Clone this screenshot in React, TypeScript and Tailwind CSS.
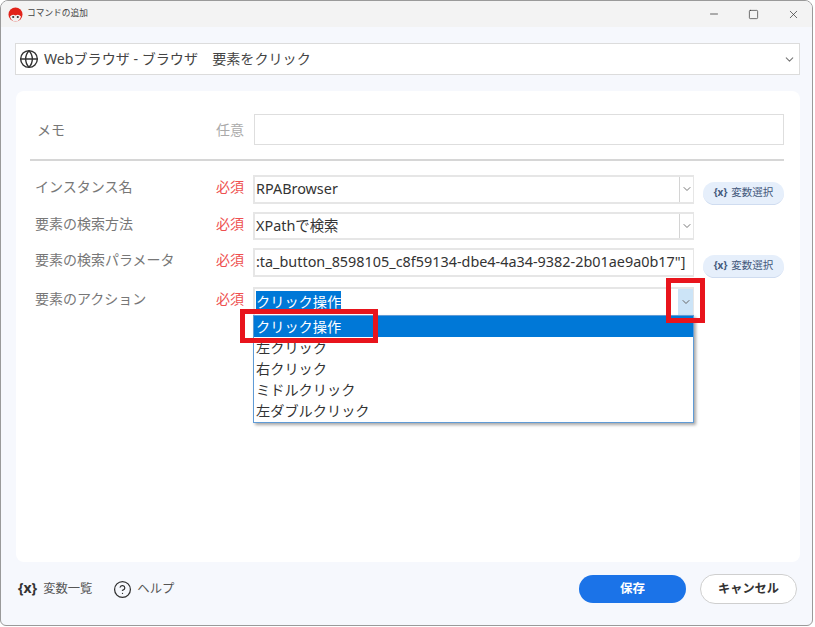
import { ChevronDown, Globe, Minus, Square, X, CircleHelp } from 'lucide-react'

const options = ['クリック操作', '左クリック', '右クリック', 'ミドルクリック', '左ダブルクリック']

function Logo() {
  return (
    <svg width="15" height="15" viewBox="0 0 15 15" className="shrink-0">
      <circle cx="7.5" cy="7.5" r="7" fill="#e2231a" />
      <path d="M2 9.5 Q4.5 6.5 7.5 8.5 Q10.5 6.5 13 9.5 Q11.5 14.5 7.5 14.5 Q3.5 14.5 2 9.5Z" fill="#f1f1f1" />
      <circle cx="5.2" cy="10" r="1.1" fill="#333" />
      <circle cx="9.8" cy="10" r="1.1" fill="#333" />
    </svg>
  )
}

function VarButton({ className }: { className?: string }) {
  return (
    <button className={`w-[81px] h-[23px] ml-[9px] rounded-full bg-[#e6effb] border-b border-[#cfdcf0] text-[10.5px] text-[#44597c] flex items-center justify-center gap-[4px] ${className ?? ''}`}>
      <span className="font-bold text-[10px]">{'{x}'}</span>
      変数選択
    </button>
  )
}

function Field({ label, height, children, button, className }: { label: string; height: string; children: React.ReactNode; button?: string; className?: string }) {
  return (
    <div className={`flex ${height} ${className ?? ''}`}>
      <div className="w-[200px] pl-[19px] text-[14px] text-[#777] leading-[23px] shrink-0">{label}</div>
      <div className="w-[37px] text-[14px] text-[#ee5050] leading-[23px] shrink-0">必須</div>
      {children}
      {button && <VarButton className={button} />}
    </div>
  )
}

function SelectBox({ text }: { text: string }) {
  return (
    <div className="w-[441px] h-full border-2 border-[#e6e6e6] border-r-[1px] flex items-center">
      <span className="flex-1 pl-[1px] text-[14.4px] text-[#333]">{text}</span>
      <span className="w-[14px] h-full border-l border-[#d4d4d4] flex items-center justify-center">
        <ChevronDown size={12} className="text-[#777]" />
      </span>
    </div>
  )
}

export default function App() {
  return (
    <div className="w-[815px] h-[627px] bg-white font-['Noto_Sans','Noto_Sans_CJK_JP',sans-serif]">
      <div className="w-[813px] h-[626px] relative flex flex-col bg-[#f6f8fd] border border-[#9a9a9a] rounded-t-lg rounded-b-md overflow-hidden">
        {/* Title bar */}
        <div className="h-[26px] bg-[#f3f3f3] flex items-center shrink-0 pl-[7px]">
          <Logo />
          <span className="ml-[4px] text-[8.7px] text-[#444]">コマンドの追加</span>
          <div className="ml-auto flex items-center gap-[28px] pr-[12px] text-[#333]">
            <Minus size={12} strokeWidth={1.5} />
            <Square size={11} strokeWidth={1.5} />
            <X size={13} strokeWidth={1.3} />
          </div>
        </div>

        {/* Command selector */}
        <div className="mt-[16px] ml-[14px] w-[785px] h-[32px] bg-white border border-[#dcdcdc] flex items-center pl-[3px] pr-[3px] shrink-0">
          <Globe size={20} strokeWidth={1.7} className="text-[#333]" />
          <span className="ml-[5px] text-[14.1px] text-[#444] whitespace-pre">Webブラウザ - ブラウザ　要素をクリック</span>
          <ChevronDown size={13} className="ml-auto text-[#777]" />
        </div>

        {/* Form card */}
        <div className="relative mt-[16px] ml-[15px] w-[784px] h-[471px] bg-white rounded-lg shrink-0 pt-[23px]">
          <div className="flex h-[31px] items-center">
            <div className="w-[200px] pl-[21px] text-[14px] text-[#777]">メモ</div>
            <div className="w-[38px] text-[14px] text-[#aaa]">任意</div>
            <div className="w-[530px] h-full border border-[#dedede]" />
          </div>
          <div className="mt-[14px] ml-[14px] w-[754px] h-[1.5px] bg-[#d6d6d6]" />

          <Field label="インスタンス名" height="h-[29px]" button="mt-[7px]" className="mt-[14px]">
            <SelectBox text="RPABrowser" />
          </Field>
          <Field label="要素の検索方法" height="h-[28px]" className="mt-[8px]">
            <SelectBox text="XPathで検索" />
          </Field>
          <Field label="要素の検索パラメータ" height="h-[29px]" button="mt-[7px]" className="mt-[8px]">
            <div className="w-[441px] h-full border-2 border-[#e6e6e6] border-r-[1px] flex items-center pl-[1px] text-[14.4px] text-[#333] overflow-hidden whitespace-nowrap">
              :ta_button_8598105_c8f59134-dbe4-4a34-9382-2b01ae9a0b17"]
            </div>
          </Field>
          <Field label="要素のアクション" height="h-[28px]" className="mt-[10px]">
            <div className="relative w-[441px] h-full border-2 border-[#e6e6e6] border-r-[1px] border-b-0 flex items-center">
              <span className="ml-[1px] flex-none bg-[#0078d7] text-white text-[14.2px] leading-[21px]">クリック操作</span>
              <span className="ml-auto w-[15px] h-full bg-[#cce4f7] flex items-center justify-center">
                <ChevronDown size={12} className="text-[#666]" />
              </span>

              {/* Open list */}
              <div className="absolute left-[-2px] top-[26px] w-[441px] h-[108px] bg-white border border-[#5f9bd6] shadow-[2px_2px_3px_rgba(0,0,0,0.35)] z-10">
                {options.map((o, i) => (
                  <div key={o} className={`h-[21px] pl-[2px] text-[14.2px] leading-[21px] ${i === 0 ? 'bg-[#0078d7] text-white' : 'text-[#333]'}`}>
                    {o}
                  </div>
                ))}
              </div>
            </div>
          </Field>

          {/* Red callouts */}
          <div className="absolute left-[224px] top-[218px] w-[138px] h-[34px] border-[5px] border-[#e8141c] z-20" />
          <div className="absolute left-[650px] top-[187px] w-[39px] h-[45px] border-[5px] border-[#e8141c] z-20" />
        </div>

        {/* Footer */}
        <div className="flex-1 flex items-center pl-[17px] pr-[15px] pb-[9px]">
          <span className="text-[14px] font-bold text-[#333] pb-[3px]">{'{x}'}</span>
          <span className="ml-[6px] text-[12.3px] text-[#555]">変数一覧</span>
          <CircleHelp size={19} strokeWidth={1.6} className="ml-[21px] text-[#333]" />
          <span className="ml-[5px] text-[12.3px] text-[#555]">ヘルプ</span>
          <button className="ml-auto w-[107px] h-[28px] rounded-full bg-[#1b73e8] text-white text-[12.5px] font-bold">保存</button>
          <button className="ml-[14px] w-[97px] h-[30px] rounded-full bg-white border border-[#cfcfcf] text-[#333] text-[12.2px] font-bold">キャンセル</button>
        </div>
      </div>
    </div>
  )
}
